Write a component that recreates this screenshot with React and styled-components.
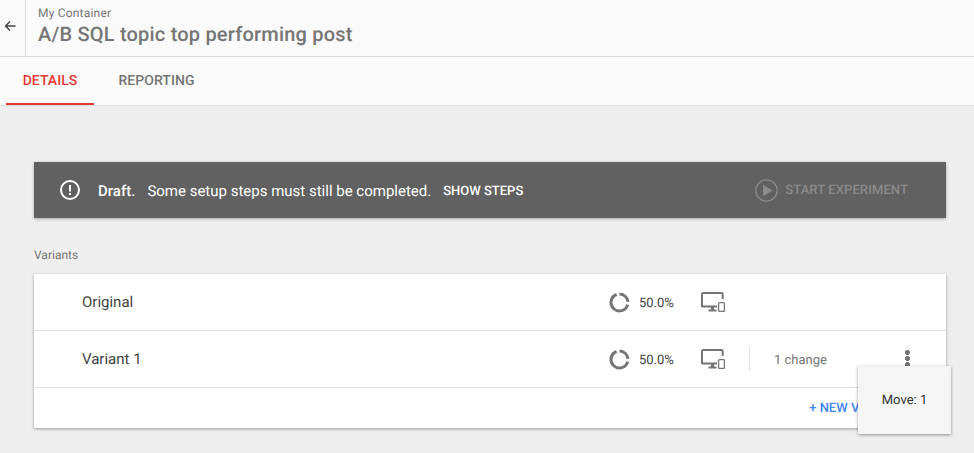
import React from 'react'
import styled, { createGlobalStyle } from 'styled-components'

const GlobalStyle = createGlobalStyle`
  * {
    box-sizing: border-box;
  }
  html, body {
    margin: 0;
    height: 100%;
    overflow: hidden;
  }
  body {
    background: #eeeeee;
    font-family: Roboto, "Liberation Sans", sans-serif;
    text-rendering: geometricPrecision;
    -webkit-font-smoothing: antialiased;
  }
`

const Page = styled.div`
  width: 974px;
  height: 453px;
  overflow: hidden;
`

const Header = styled.header`
  display: flex;
  height: 57px;
  background: #fafafa;
  border-bottom: 1px solid #dcdcdc;
`

const BackCell = styled.div`
  width: 26px;
  display: flex;
  align-items: center;
  padding: 0 0 4px 4px;
  color: #424242;
  border-right: 1px solid #dcdcdc;
`

const Titles = styled.div`
  padding: 6px 0 0 12px;
`

const Crumb = styled.div`
  font-size: 12px;
  line-height: 14px;
  letter-spacing: 0.2px;
  color: #757575;
`

const Title = styled.div`
  margin-top: 2px;
  font-size: 20px;
  line-height: 24px;
  font-weight: 500;
  letter-spacing: 0.2px;
  color: #757575;
`

const Tabs = styled.nav`
  display: flex;
  height: 49px;
  padding-left: 6px;
  background: #fafafa;
  border-bottom: 1px solid #dcdcdc;
`

const Tab = styled.div`
  width: ${(p) => p.$width}px;
  height: 48px;
  display: flex;
  align-items: center;
  justify-content: center;
  padding-top: 2px;
  font-size: 14px;
  font-weight: 500;
  letter-spacing: 0.05px;
  color: ${(p) => (p.$active ? '#e53935' : '#757575')};
  border-bottom: 2px solid ${(p) => (p.$active ? '#e53935' : 'transparent')};
`

const Content = styled.main`
  padding: 56px 28px 0 34px;
`

const Banner = styled.section`
  display: flex;
  align-items: center;
  height: 56px;
  padding: 0 38px 0 26px;
  background: #616161;
  color: #fff;
  box-shadow: 0 1px 3px rgba(0, 0, 0, 0.3);
`

const Draft = styled.strong`
  margin: 2px 0 0 18px;
  font-weight: 500;
  font-size: 15px;
`

const Message = styled.span`
  margin: 2px 0 0 12px;
  font-size: 15px;
`

const ShowSteps = styled.span`
  margin: 2px 0 0 12px;
  font-size: 13px;
  font-weight: 500;
`

const StartButton = styled.div`
  margin-left: auto;
  display: flex;
  align-items: center;
  gap: 7px;
  font-size: 13px;
  font-weight: 500;
  letter-spacing: 0.1px;
  color: #8b8b8b;
`

const SectionLabel = styled.div`
  margin-top: 30px;
  font-size: 12px;
  line-height: 14px;
  color: #757575;
`

const Card = styled.section`
  position: relative;
  margin-top: 12px;
  background: #fff;
  box-shadow: 0 1px 3px rgba(0, 0, 0, 0.35);
`

const Row = styled.div`
  display: flex;
  align-items: center;
  height: 57px;
  padding-left: 48px;
  border-bottom: 1px solid #e0e0e0;
`

const VariantName = styled.div`
  width: 527px;
  font-size: 15px;
  color: #424242;
`

const Weight = styled.div`
  display: flex;
  align-items: center;
  gap: 9px;
  width: 92px;
  font-size: 13px;
  color: #424242;
`

const WeightValue = styled.span`
  margin-top: 2px;
`

const Divider = styled.div`
  width: 1px;
  height: 24px;
  margin-left: 24px;
  background: #e0e0e0;
`

const Changes = styled.div`
  margin: 2px 0 0 24px;
  width: 124px;
  font-size: 13px;
  color: #757575;
`

const Footer = styled.div`
  display: flex;
  justify-content: flex-end;
  align-items: center;
  height: 40px;
  padding-right: 41px;
`

const NewVariant = styled.div`
  font-size: 13px;
  font-weight: 500;
  color: #4285f4;
`

const Tooltip = styled.div`
  position: absolute;
  top: 92px;
  right: -5px;
  width: 93px;
  height: 68px;
  display: flex;
  align-items: center;
  justify-content: center;
  background: #f5f5f5;
  font-size: 13px;
  color: #333;
  box-shadow: 0 1px 3px rgba(0, 0, 0, 0.4);
`

const MoreIcon = styled.div`
  position: absolute;
  top: 76px;
  right: 36px;
  width: 5px;
  height: 17px;
  background: radial-gradient(circle at 2.5px 2.5px, #757575 2.2px, transparent 2.6px) 0 0 / 5px 6px repeat-y;
`

const BackIcon = () => (
  <svg width="12" height="12" viewBox="0 0 12 12" fill="none" stroke="currentColor" strokeWidth="1.4">
    <path d="M11.5 6H1.5M6 1.5L1.5 6L6 10.5" />
  </svg>
)

const AlertIcon = () => (
  <svg width="20" height="20" viewBox="0 0 20 20" fill="none">
    <circle cx="10" cy="10" r="9" stroke="#fff" strokeWidth="2" />
    <rect x="9" y="5" width="2" height="6.5" fill="#fff" />
    <rect x="9" y="13" width="2" height="2" fill="#fff" />
  </svg>
)

const PlayIcon = () => (
  <svg width="23" height="23" viewBox="0 0 23 23" fill="none">
    <circle cx="11.5" cy="11.5" r="10.7" stroke="#8b8b8b" strokeWidth="1.3" />
    <path d="M8 5.8L17.5 11.5L8 17.2Z" fill="#8b8b8b" />
  </svg>
)

// split ring, two arcs for the traffic weight
const WeightIcon = () => (
  <svg width="21" height="21" viewBox="0 0 21 21" fill="none" stroke="#757575" strokeWidth="3">
    <path d="M10.5 2A8.5 8.5 0 0 1 18.97 9.76" />
    <path d="M18.71 12.7A8.5 8.5 0 1 1 7.59 2.51" />
  </svg>
)

const DevicesIcon = () => (
  <svg width="24" height="20" viewBox="0 0 24 20" fill="none">
    <path d="M1 15V2.2C1 1.5 1.5 1 2.2 1H20.5C21.2 1 21.7 1.5 21.7 2.2V7" stroke="#757575" strokeWidth="2" />
    <path d="M1 14.5H16" stroke="#757575" strokeWidth="2" />
    <path d="M10 15H13V17.5H15.5V19.5H7.5V17.5H10Z" fill="#757575" />
    <rect x="17.6" y="10.6" width="5.8" height="8.8" rx="1" stroke="#757575" strokeWidth="1.3" />
  </svg>
)

function App() {
  return (
    <>
      <GlobalStyle />
      <Page>
        <Header>
          <BackCell>
            <BackIcon />
          </BackCell>
          <Titles>
            <Crumb>My Container</Crumb>
            <Title>A/B SQL topic top performing post</Title>
          </Titles>
        </Header>
        <Tabs>
          <Tab $active $width={88}>DETAILS</Tab>
          <Tab $width={125}>REPORTING</Tab>
        </Tabs>
        <Content>
          <Banner>
            <AlertIcon />
            <Draft>Draft.</Draft>
            <Message>Some setup steps must still be completed.</Message>
            <ShowSteps>SHOW STEPS</ShowSteps>
            <StartButton>
              <PlayIcon />
              START EXPERIMENT
            </StartButton>
          </Banner>
          <SectionLabel>Variants</SectionLabel>
          <Card>
            <Row>
              <VariantName>Original</VariantName>
              <Weight>
                <WeightIcon />
                <WeightValue>50.0%</WeightValue>
              </Weight>
              <DevicesIcon />
            </Row>
            <Row>
              <VariantName>Variant 1</VariantName>
              <Weight>
                <WeightIcon />
                <WeightValue>50.0%</WeightValue>
              </Weight>
              <DevicesIcon />
              <Divider />
              <Changes>1 change</Changes>
            </Row>
            <MoreIcon />
            <Footer>
              <NewVariant>+ NEW VARIANT</NewVariant>
            </Footer>
            <Tooltip>Move: 1</Tooltip>
          </Card>
        </Content>
      </Page>
    </>
  )
}

export default App
